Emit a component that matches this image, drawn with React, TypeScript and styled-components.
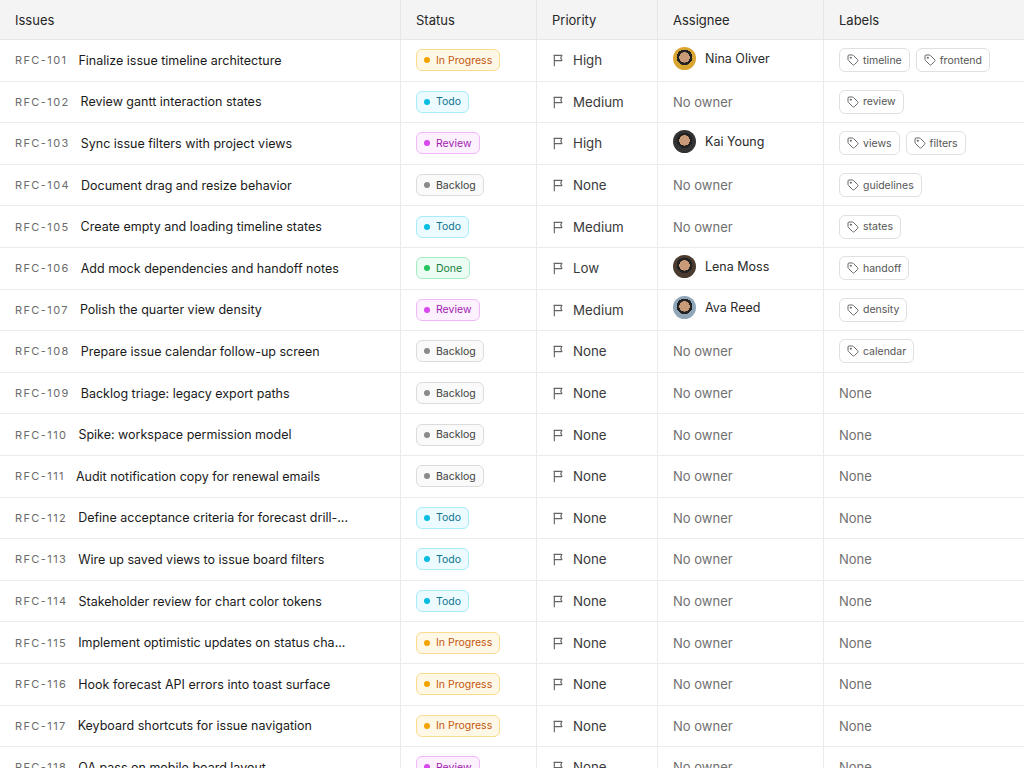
import React from "react";
import styled, { createGlobalStyle } from "styled-components";

const Global = createGlobalStyle`
  body { margin: 0; font-family: Inter, "Noto Sans", sans-serif; background: #fff; color: #1f1f1f; }
`;

const Table = styled.div`
  width: 1024px; height: 768px; overflow: hidden;
`;
const cols = "400px 136px 121px 166px 201px";
const Head = styled.div`
  display: grid; grid-template-columns: ${cols}; height: 39px; background: #f4f4f4;
  border-bottom: 1px solid #e6e6e6;
`;
const HCell = styled.div<{ $first?: boolean }>`
  display: flex; align-items: center; padding-left: 15px; font-size: 13px; color: #262626;
  border-left: ${p => (p.$first ? "none" : "1px solid #e6e6e6")};
`;
const Row = styled.div`
  display: grid; grid-template-columns: ${cols}; height: 40.6px; border-bottom: 1px solid #ebebeb;
`;
const Cell = styled.div<{ $first?: boolean }>`
  display: flex; align-items: center; gap: 8px; padding-left: 15px; overflow: hidden; white-space: nowrap;
  border-left: ${p => (p.$first ? "none" : "1px solid #ebebeb")};
`;
const IssueCell = styled(Cell)` gap: 11px; `;
const Id = styled.span`
  font-size: 11px; letter-spacing: 1.4px; color: #6b6b6b; flex: none;
`;
const Title = styled.span`
  font-size: 12.5px; color: #1a1a1a;
`;
const statusStyles: Record<string, [string, string, string, string]> = {
  "In Progress": ["#fff8e6", "#fbdc8e", "#c2570c", "#f5a300"],
  Todo: ["#ecfbff", "#a8ecfa", "#0e7490", "#06bde0"],
  Review: ["#fdf0ff", "#f2b9fa", "#a21caf", "#d946ef"],
  Backlog: ["#fafafa", "#dcdcdc", "#404040", "#8a8a8a"],
  Done: ["#ecfdf3", "#a6ecc3", "#15803d", "#22c55e"],
};
const Badge = styled.span<{ $s: string }>`
  display: inline-flex; align-items: center; gap: 6px; height: 20px; padding: 0 7px;
  border-radius: 6px; font-size: 10.5px;
  background: ${p => statusStyles[p.$s][0]}; border: 1px solid ${p => statusStyles[p.$s][1]};
  color: ${p => statusStyles[p.$s][2]};
  &::before { content: ""; width: 6px; height: 6px; border-radius: 50%; background: ${p => statusStyles[p.$s][3]}; }
`;
const Prio = styled.span`
  font-size: 13.3px; color: #3a3a3a; display: flex; align-items: center; gap: 7px;
`;
const Muted = styled.span`
  font-size: 13px; color: #707070;
`;
const Name = styled.span`
  font-size: 12.5px; color: #2a2a2a; margin-top: -4px;
`;
const Avatar = styled.span<{ $c: string }>`
  width: 23px; height: 23px; border-radius: 50%; flex: none; margin-top: -4px;
  background: radial-gradient(circle at 50% 45%, #c89a78 0 30%, #222 31% 45%, ${p => p.$c} 46%);
`;
const Labels = styled.div`
  display: flex; gap: 6px;
`;
const Tag = styled.span`
  display: inline-flex; align-items: center; gap: 4px; height: 22px; padding: 0 7px;
  border: 1px solid #e0e0e0; border-radius: 6px; font-size: 10.5px; color: #555;
`;
const AssigneeCell = styled(Cell)` gap: 9px; `;

const Flag = () => (
  <svg width="14" height="14" viewBox="0 0 24 24" fill="none" stroke="#666" strokeWidth="2" strokeLinecap="round" strokeLinejoin="round">
    <path d="M4 22V4" /><path d="M4 4h13l-2 4.5 2 4.5H4" />
  </svg>
);
const TagIcon = () => (
  <svg width="12" height="12" viewBox="0 0 24 24" fill="none" stroke="#666" strokeWidth="2" strokeLinecap="round" strokeLinejoin="round">
    <path d="M12.6 2.6A2 2 0 0 0 11.2 2H4a2 2 0 0 0-2 2v7.2a2 2 0 0 0 .6 1.4l8.7 8.7a2.4 2.4 0 0 0 3.4 0l6.6-6.6a2.4 2.4 0 0 0 0-3.4z" />
    <circle cx="7.5" cy="7.5" r="1" fill="#666" />
  </svg>
);

type R = [string, string, string, string, [string, string] | null, string[]];
const rows: R[] = [
  ["101", "Finalize issue timeline architecture", "In Progress", "High", ["Nina Oliver", "#d9a531"], ["timeline", "frontend"]],
  ["102", "Review gantt interaction states", "Todo", "Medium", null, ["review"]],
  ["103", "Sync issue filters with project views", "Review", "High", ["Kai Young", "#333"], ["views", "filters"]],
  ["104", "Document drag and resize behavior", "Backlog", "None", null, ["guidelines"]],
  ["105", "Create empty and loading timeline states", "Todo", "Medium", null, ["states"]],
  ["106", "Add mock dependencies and handoff notes", "Done", "Low", ["Lena Moss", "#4a3a30"], ["handoff"]],
  ["107", "Polish the quarter view density", "Review", "Medium", ["Ava Reed", "#8fa6b8"], ["density"]],
  ["108", "Prepare issue calendar follow-up screen", "Backlog", "None", null, ["calendar"]],
  ["109", "Backlog triage: legacy export paths", "Backlog", "None", null, []],
  ["110", "Spike: workspace permission model", "Backlog", "None", null, []],
  ["111", "Audit notification copy for renewal emails", "Backlog", "None", null, []],
  ["112", "Define acceptance criteria for forecast drill-...", "Todo", "None", null, []],
  ["113", "Wire up saved views to issue board filters", "Todo", "None", null, []],
  ["114", "Stakeholder review for chart color tokens", "Todo", "None", null, []],
  ["115", "Implement optimistic updates on status cha...", "In Progress", "None", null, []],
  ["116", "Hook forecast API errors into toast surface", "In Progress", "None", null, []],
  ["117", "Keyboard shortcuts for issue navigation", "In Progress", "None", null, []],
  ["118", "QA pass on mobile board layout", "Review", "None", null, []],
];

export default function App() {
  return (
    <Table>
      <Global />
      <Head>
        <HCell $first>Issues</HCell>
        <HCell>Status</HCell>
        <HCell>Priority</HCell>
        <HCell>Assignee</HCell>
        <HCell>Labels</HCell>
      </Head>
      {rows.map(r => (
        <Row key={r[0]}>
          <IssueCell $first><Id>RFC-{r[0]}</Id><Title>{r[1]}</Title></IssueCell>
          <Cell><Badge $s={r[2]}>{r[2]}</Badge></Cell>
          <Cell><Prio><Flag />{r[3]}</Prio></Cell>
          <AssigneeCell>
            {r[4] ? <><Avatar $c={r[4][1]} /><Name>{r[4][0]}</Name></> : <Muted>No owner</Muted>}
          </AssigneeCell>
          <Cell>
            {r[5].length ? (
              <Labels>{r[5].map(l => <Tag key={l}><TagIcon />{l}</Tag>)}</Labels>
            ) : <Muted>None</Muted>}
          </Cell>
        </Row>
      ))}
    </Table>
  );
}
